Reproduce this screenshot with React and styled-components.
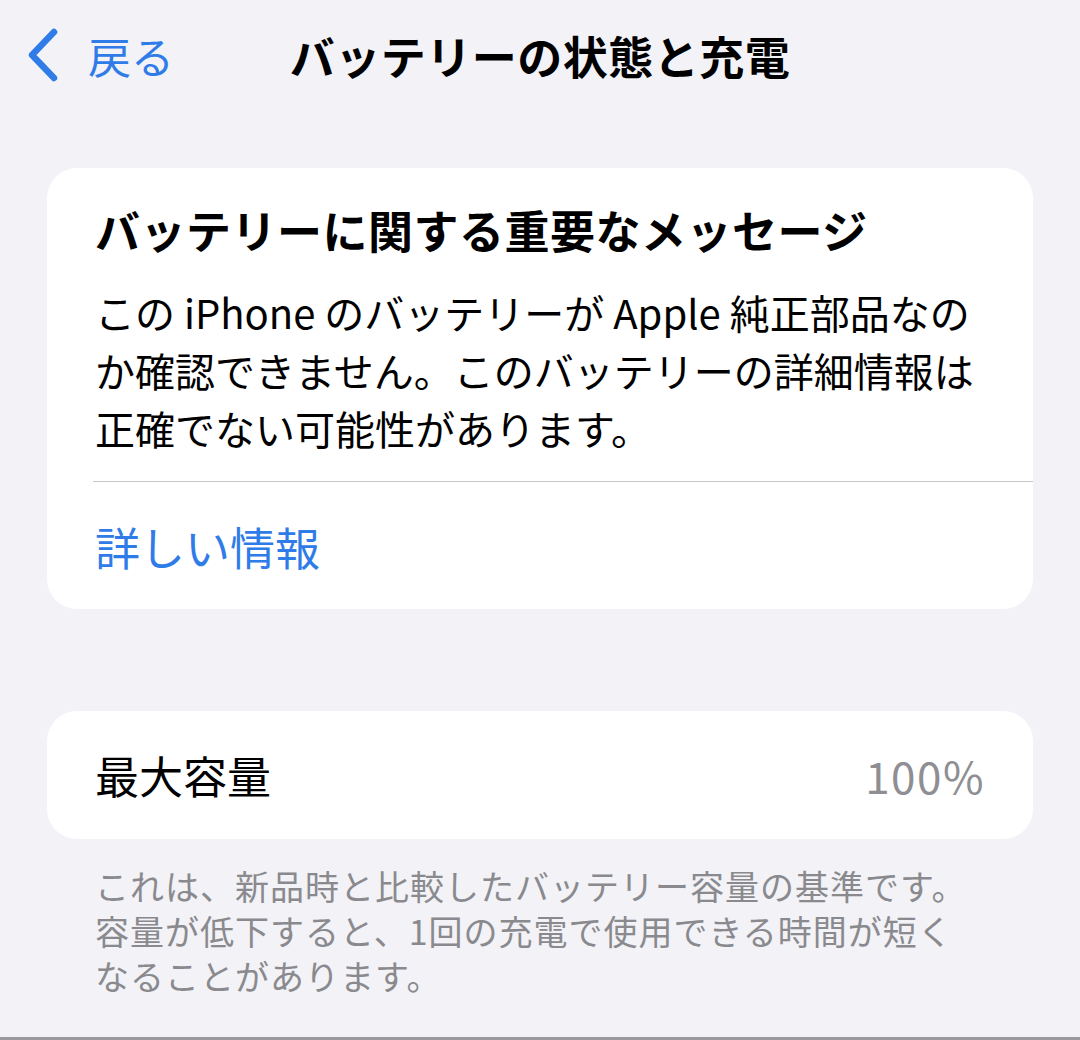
import React from 'react';
import styled, { createGlobalStyle } from 'styled-components';

const Global = createGlobalStyle`
  html, body {
    margin: 0;
    padding: 0;
    background: #f2f2f7;
  }
  body {
    font-family: "Noto Sans CJK JP", "Noto Sans", sans-serif;
    -webkit-font-smoothing: antialiased;
  }
`;

const Screen = styled.div`
  width: 1080px;
  height: 1040px;
  box-sizing: border-box;
  background: #f2f2f7;
  border-bottom: 3px solid #9a9a9e;
  overflow: hidden;
`;

const NavBar = styled.header`
  display: grid;
  grid-template-columns: 1fr auto 1fr;
  align-items: center;
  height: 110px;
  padding: 0 26px;
`;

const BackButton = styled.button`
  display: flex;
  align-items: center;
  gap: 28px;
  justify-self: start;
  background: none;
  border: 0;
  padding: 0;
  color: #2f7ce8;
  font-family: inherit;
  font-size: 43px;
  line-height: 1;
  cursor: pointer;
`;

const Title = styled.h1`
  margin: 0;
  font-size: 45px;
  font-weight: 700;
  color: #000;
  letter-spacing: 0.5px;
`;

const Content = styled.main`
  display: flex;
  flex-direction: column;
  padding: 58px 47px 0;
`;

const Card = styled.section`
  background: #fff;
  border-radius: 30px;
  margin-top: ${(p) => p.$gap || 0}px;
  overflow: hidden;
`;

const MessageBody = styled.div`
  padding: 34px 48px 24px;
`;

const Heading = styled.h2`
  margin: 0 0 25px;
  font-size: 45px;
  line-height: 56px;
  font-weight: 700;
  color: #000;
  letter-spacing: 0.5px;
`;

const Paragraph = styled.p`
  margin: 0;
  font-size: 40px;
  line-height: 58px;
  color: #000;
`;

const Divider = styled.hr`
  border: 0;
  height: 1px;
  background: #c8c8cc;
  margin: 0 0 0 46px;
`;

const LinkRow = styled.a`
  display: block;
  padding: 37px 48px 34px;
  font-size: 45px;
  line-height: 56px;
  color: #2f7ce8;
  text-decoration: none;
`;

const ValueRow = styled.div`
  display: flex;
  align-items: center;
  justify-content: space-between;
  height: 128px;
  padding: 0 48px;
`;

const Label = styled.span`
  font-size: 44px;
  color: #000;
`;

const Value = styled.span`
  font-size: 44px;
  color: #8e8e93;
  letter-spacing: 1.5px;
`;

const Footnote = styled.p`
  margin: 24px 48px 0;
  font-size: 34px;
  line-height: 45px;
  letter-spacing: 1px;
  color: #8a8a8e;
`;

const Chevron = () => (
  <svg width="34" height="54" viewBox="0 0 34 54" fill="none">
    <path
      d="M28 4 L6 27 L28 50"
      stroke="currentColor"
      strokeWidth="6.5"
      strokeLinecap="round"
      strokeLinejoin="round"
    />
  </svg>
);

export default function App() {
  return (
    <>
      <Global />
      <Screen>
        <NavBar>
          <BackButton>
            <Chevron />
            戻る
          </BackButton>
          <Title>バッテリーの状態と充電</Title>
        </NavBar>
        <Content>
          <Card>
            <MessageBody>
              <Heading>バッテリーに関する重要なメッセージ</Heading>
              <Paragraph>
                この iPhone のバッテリーが Apple 純正部品なの
                <br />
                か確認できません。このバッテリーの詳細情報は
                <br />
                正確でない可能性があります。
              </Paragraph>
            </MessageBody>
            <Divider />
            <LinkRow href="#">詳しい情報</LinkRow>
          </Card>
          <Card $gap={102}>
            <ValueRow>
              <Label>最大容量</Label>
              <Value>100%</Value>
            </ValueRow>
          </Card>
          <Footnote>
            これは、新品時と比較したバッテリー容量の基準です。
            <br />
            容量が低下すると、1回の充電で使用できる時間が短く
            <br />
            なることがあります。
          </Footnote>
        </Content>
      </Screen>
    </>
  );
}
